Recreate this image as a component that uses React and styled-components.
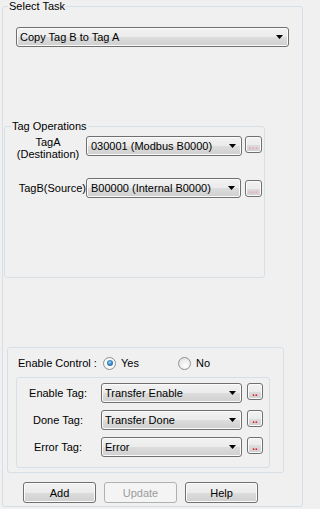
import React from 'react';
import styled, { createGlobalStyle } from 'styled-components';

const GlobalStyle = createGlobalStyle`
  html, body {
    margin: 0;
    padding: 0;
    background: #f0f0f0;
  }
  body {
    font-family: "Liberation Sans", Arial, sans-serif;
    font-size: 11px;
    color: #000;
  }
  * {
    box-sizing: border-box;
  }
`;

const winGradient = 'linear-gradient(#f2f2f2 0%, #ebebeb 50%, #dddddd 50%, #cfcfcf 100%)';

const Dialog = styled.div`
  width: 305px;
  height: 509px;
  padding-left: 2px;
`;

const GroupBox = styled.fieldset`
  display: block;
  margin: ${p => p.$mt || 0}px 0 0 ${p => p.$ml || 0}px;
  padding: 0;
  width: ${p => p.$w}px;
  height: ${p => p.$h}px;
  min-width: 0;
  border: 1px solid #d5dfe5;
  border-radius: 3px;
`;

const Caption = styled.legend`
  margin-left: ${p => p.$indent}px;
  padding: 0 1px;
  font-size: 11px;
  line-height: 13px;
`;

const Combo = styled.div`
  display: flex;
  align-items: center;
  flex: none;
  width: ${p => p.$w}px;
  height: 20px;
  margin: ${p => p.$mt || 0}px 0 0 ${p => p.$ml || 0}px;
  padding: 0 5px 0 ${p => p.$pl || 3}px;
  border: 1px solid #707070;
  border-radius: 3px;
  background: ${winGradient};
  box-shadow: inset 0 0 0 1px #fbfbfb;
  white-space: nowrap;
`;

const ComboText = styled.span`
  flex: 1;
  line-height: 13px;
  overflow: hidden;
`;

const MoreButton = styled.button`
  display: flex;
  align-items: flex-end;
  justify-content: center;
  flex: none;
  width: ${p => p.$w || 17}px;
  height: 17px;
  margin-left: ${p => p.$ml}px;
  padding: 0 0 3px;
  border: 1px solid #707070;
  border-radius: 3px;
  background: ${winGradient};
  box-shadow: inset 0 0 0 1px #fbfbfb;
  color: ${p => p.$dots};
  font-family: "Liberation Sans", Arial, sans-serif;
  font-size: 10px;
  font-weight: bold;
  line-height: 6px;
  letter-spacing: ${p => p.$spacing || 0}px;
`;

const TagRow = styled.div`
  display: flex;
  align-items: ${p => p.$align || 'flex-start'};
  margin-top: ${p => p.$mt}px;
  padding-left: ${p => p.$pl || 0}px;
`;

const RowLabel = styled.div`
  flex: none;
  width: ${p => p.$w}px;
  line-height: ${p => p.$lh || 12}px;
  text-align: ${p => p.$text || 'center'};
  white-space: nowrap;
`;

const RadioLine = styled.div`
  display: flex;
  align-items: center;
  height: 14px;
  margin-top: 8px;
  padding-left: 10px;
`;

const RadioCaption = styled.span`
  width: 85px;
  white-space: nowrap;
`;

const RadioOption = styled.label`
  display: flex;
  align-items: center;
  width: ${p => p.$w}px;
`;

const RadioCircle = styled.span`
  display: flex;
  align-items: center;
  justify-content: center;
  width: 13px;
  height: 13px;
  margin-right: 5px;
  border: 1px solid #8e8f8f;
  border-radius: 50%;
  background: ${p => p.$checked
    ? 'radial-gradient(circle, #ffffff 40%, #e8e8e8 100%)'
    : 'radial-gradient(circle at 60% 70%, #fbfbfb 10%, #dcdcdc 100%)'};

  &::after {
    content: '';
    width: 6px;
    height: 6px;
    border-radius: 50%;
    background: ${p => p.$checked
      ? 'radial-gradient(circle at 45% 40%, #9fd7f5 0%, #3a86c2 45%, #134a7c 100%)'
      : 'transparent'};
  }
`;

const ButtonBar = styled.div`
  display: flex;
  gap: 8px;
  margin-top: 9px;
  padding-left: 20px;
`;

const PushButton = styled.button`
  width: 73px;
  height: 21px;
  padding: 0;
  border: 1px solid ${p => (p.disabled ? '#adb2b5' : '#707070')};
  border-radius: 3px;
  background: ${p => (p.disabled ? '#f4f4f4' : winGradient)};
  box-shadow: ${p => (p.disabled ? 'none' : 'inset 0 0 0 1px #fbfbfb')};
  color: ${p => (p.disabled ? '#9c9c9c' : '#000')};
  font-family: "Liberation Sans", Arial, sans-serif;
  font-size: 11px;
`;

const DropArrow = () => (
  <svg width="7" height="4" viewBox="0 0 7 4">
    <path d="M0 0H7L3.5 4Z" fill="#000" />
  </svg>
);

const Select = ({ value, ...rest }) => (
  <Combo {...rest}>
    <ComboText>{value}</ComboText>
    <DropArrow />
  </Combo>
);

const controlTags = [
  { label: 'Enable Tag:', value: 'Transfer Enable', mt: 5 },
  { label: 'Done Tag:', value: 'Transfer Done', mt: 7 },
  { label: 'Error Tag:', value: 'Error', mt: 7 },
];

export default function App() {
  return (
    <Dialog>
      <GlobalStyle />
      <GroupBox $w={301} $h={507}>
        <Caption $indent={5}>Select Task</Caption>
        <Select value="Copy Tag B to Tag A" $w={273} $mt={14} $ml={13} />

        <GroupBox $w={261} $h={158} $mt={73} $ml={1}>
          <Caption $indent={6}>Tag Operations</Caption>
          <TagRow $mt={3} $pl={5}>
            <RowLabel $w={76}>TagA<br />(Destination)</RowLabel>
            <Select value="030001 (Modbus B0000)" $w={156} $pl={4} />
            <MoreButton $ml={3} $dots="#f4a0b0" $spacing={0.5}>...</MoreButton>
          </TagRow>
          <TagRow $mt={18} $pl={5} $align="center">
            <RowLabel $w={76} $text="right">TagB(Source)</RowLabel>
            <Select value="B00000 (Internal B0000)" $w={155} $pl={4} />
            <MoreButton $ml={4} $dots="#f4a0b0" $spacing={0.5}>...</MoreButton>
          </TagRow>
        </GroupBox>

        <GroupBox $w={277} $h={126} $mt={69} $ml={4}>
          <RadioLine>
            <RadioCaption>Enable Control :</RadioCaption>
            <RadioOption $w={75}>
              <RadioCircle $checked />
              Yes
            </RadioOption>
            <RadioOption $w={40}>
              <RadioCircle />
              No
            </RadioOption>
          </RadioLine>

          <GroupBox $w={254} $h={91} $mt={7} $ml={8}>
            {controlTags.map(tag => (
              <TagRow key={tag.label} $mt={tag.mt}>
                <RowLabel $w={82} $lh={20}>{tag.label}</RowLabel>
                <Select value={tag.value} $w={141} $ml={2} />
                <MoreButton $ml={5} $w={16} $dots="#e8102a">..</MoreButton>
              </TagRow>
            ))}
          </GroupBox>
        </GroupBox>

        <ButtonBar>
          <PushButton>Add</PushButton>
          <PushButton disabled>Update</PushButton>
          <PushButton>Help</PushButton>
        </ButtonBar>
      </GroupBox>
    </Dialog>
  );
}
